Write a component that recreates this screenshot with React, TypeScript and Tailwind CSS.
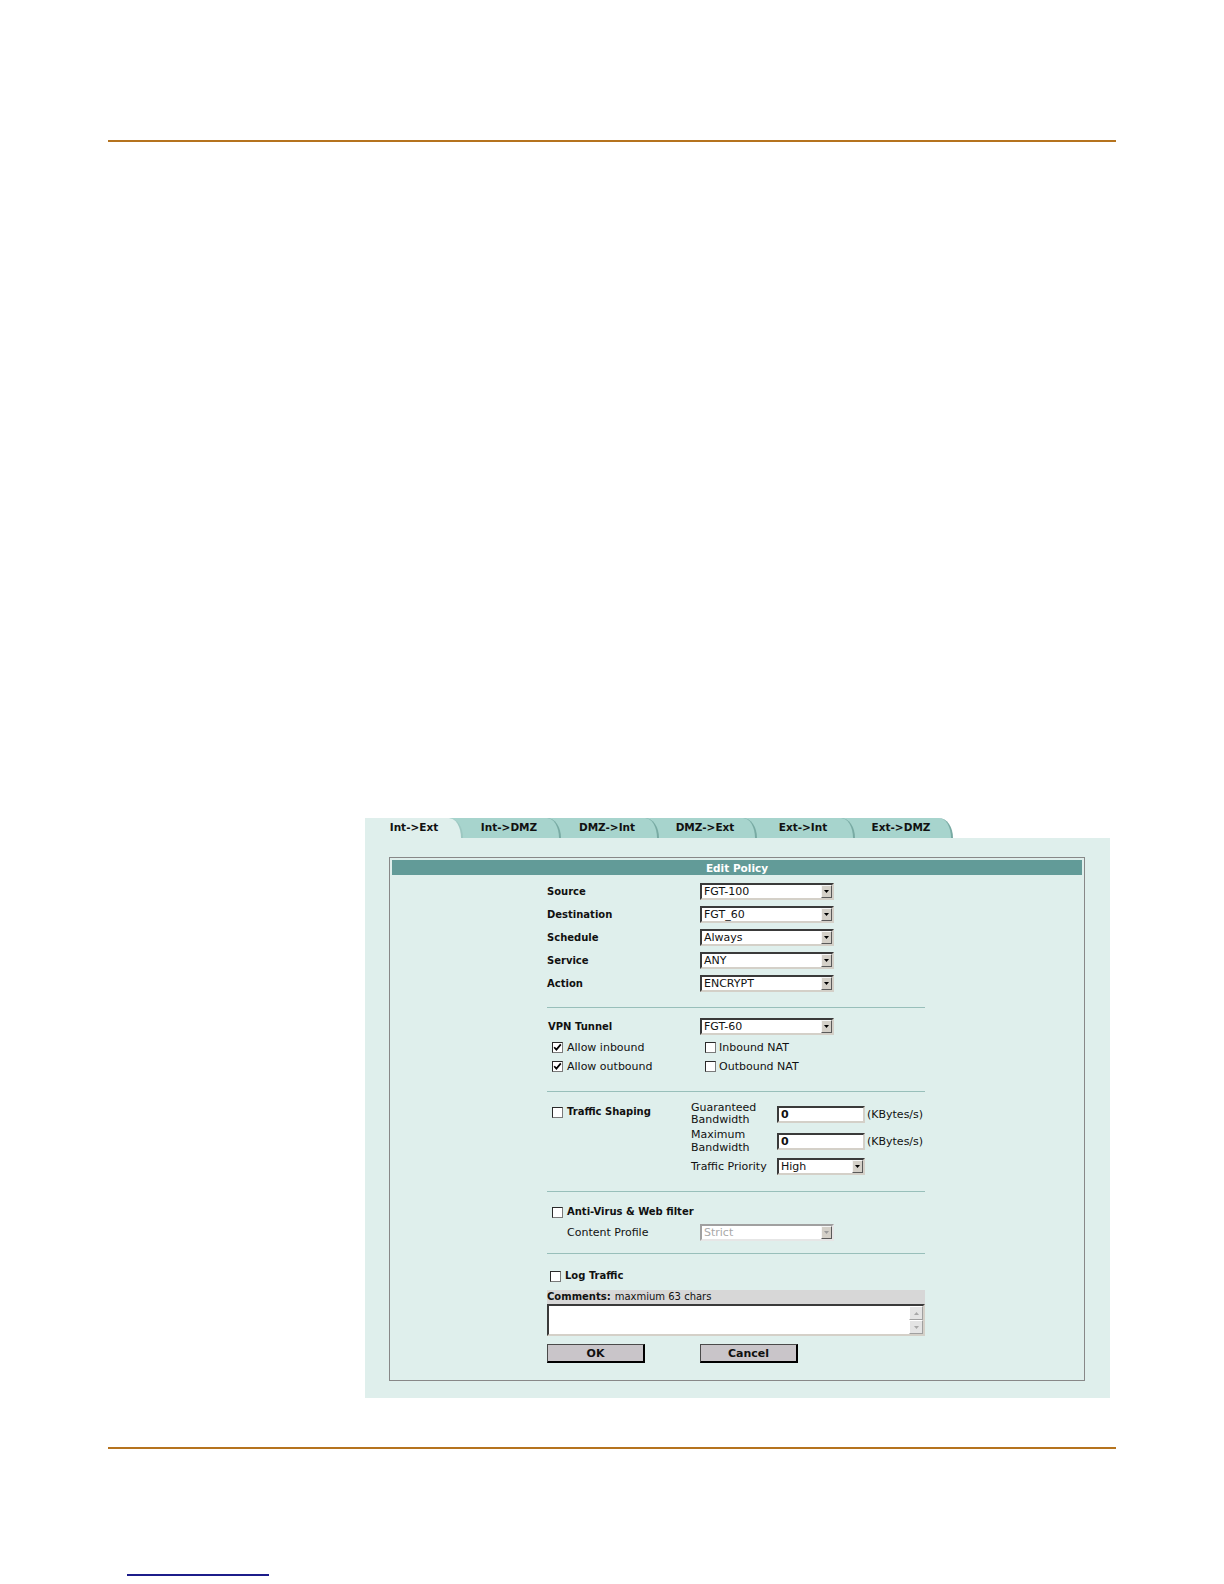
import clsx from 'clsx';

const TABS = ['Int->Ext', 'Int->DMZ', 'DMZ->Int', 'DMZ->Ext', 'Ext->Int', 'Ext->DMZ'];

function Check({ checked }: { checked?: boolean }) {
  return (
    <span className="inline-flex h-[11px] w-[11px] shrink-0 items-center justify-center border border-t-[#2a2a2a] border-l-[#2a2a2a] border-r-[#7a7a7a] border-b-[#7a7a7a] bg-white">
      {checked && (
        <svg width="9" height="9" viewBox="0 0 9 9">
          <path d="M1.2 4.2 L3.4 6.6 L7.8 1.4" stroke="#000" strokeWidth="1.7" fill="none" />
        </svg>
      )}
    </span>
  );
}

function Select({ value, className, disabled }: { value: string; className: string; disabled?: boolean }) {
  return (
    <div
      className={clsx(
        'flex h-[17px] items-stretch border-2 bg-white',
        disabled
          ? 'border-t-[#a0a0a0] border-l-[#a0a0a0] border-b-[#e6e6e6] border-r-[#e6e6e6] text-[#a9a9a9]'
          : 'border-t-[#3a3a3a] border-l-[#3a3a3a] border-b-[#d4d0c8] border-r-[#d4d0c8] text-[#111]',
        className
      )}
    >
      <span className="flex-1 pl-[2px] text-[11px] leading-[13px]">{value}</span>
      <span className="flex w-[11px] items-center justify-center border border-t-[#f6f6f6] border-l-[#f6f6f6] border-b-[#5a5a5a] border-r-[#5a5a5a] bg-[#d4d0c8]">
        <svg width="5" height="3" viewBox="0 0 5 3">
          <path d="M0 0h5L2.5 3z" fill={disabled ? '#9a9a9a' : '#000'} />
        </svg>
      </span>
    </div>
  );
}

function TextInput({ value }: { value: string }) {
  return (
    <div className="h-[17px] w-[88px] border-2 border-t-[#3a3a3a] border-l-[#3a3a3a] border-b-[#d4d0c8] border-r-[#d4d0c8] bg-white pl-[2px] text-[11px] font-bold leading-[13px]">
      {value}
    </div>
  );
}

function Label({ children, className }: { children: React.ReactNode; className?: string }) {
  return <span className={clsx('block text-[10px] font-bold leading-[12px]', className)}>{children}</span>;
}

function Rule() {
  return <div className="h-px bg-[#98bfba]" />;
}

function Tabs() {
  return (
    <div className="flex h-[20px]">
      {TABS.map((t, i) => (
        <div key={t} className={clsx('w-[98px]', i === TABS.length - 1 ? 'bg-white' : 'bg-[#a7d4cd]')}>
          <div
            className={clsx(
              'flex h-full items-center justify-center rounded-tr-[14px_20px] border-r-2 text-[10.5px] font-bold',
              i === 0 ? 'bg-[#dfefec] border-[#9cc7c1] pl-[2px]' : 'bg-[#a7d4cd] border-[#78aaa3] pr-[4px]'
            )}
          >
            {t}
          </div>
        </div>
      ))}
    </div>
  );
}

function PolicyForm() {
  const top = [
    ['Source', 'FGT-100'],
    ['Destination', 'FGT_60'],
    ['Schedule', 'Always'],
    ['Service', 'ANY'],
    ['Action', 'ENCRYPT'],
  ];
  return (
    <div className="ml-[155px] w-[378px] pb-[15px] pt-[5px]">
      {top.map(([l, v]) => (
        <div key={l} className="flex h-[23px] items-center">
          <Label className="w-[153px]">{l}</Label>
          <Select value={v} className="w-[134px]" />
        </div>
      ))}

      <div className="mt-[12px]">
        <Rule />
      </div>

      {/* VPN */}
      <div className="mt-[7px] flex h-[23px] items-center">
        <Label className="w-[153px] pl-[1px]">VPN Tunnel</Label>
        <Select value="FGT-60" className="w-[134px]" />
      </div>
      {[
        ['Allow inbound', 'Inbound NAT'],
        ['Allow outbound', 'Outbound NAT'],
      ].map(([a, b]) => (
        <div key={a} className="flex h-[19px] items-center text-[11px] leading-[13px]">
          <div className="flex w-[153px] items-center pl-[5px]">
            <Check checked />
            <span className="ml-[4px]">{a}</span>
          </div>
          <div className="flex items-center pl-[5px]">
            <Check />
            <span className="ml-[3px]">{b}</span>
          </div>
        </div>
      ))}

      <div className="mt-[15px]">
        <Rule />
      </div>

      {/* Traffic shaping */}
      <div className="mt-[8px] flex">
        <div className="flex w-[144px] items-center self-start pl-[5px] pt-[6px]">
          <Check />
          <Label className="ml-[4px]">Traffic Shaping</Label>
        </div>
        <div className="text-[11px] leading-[13px]">
          <div className="flex h-[28px] items-center">
            <div className="w-[86px] leading-[12.5px]">
              Guaranteed
              <br />
              Bandwidth
            </div>
            <TextInput value="0" />
            <span className="ml-[2px]">(KBytes/s)</span>
          </div>
          <div className="flex h-[27px] items-center">
            <div className="w-[86px] leading-[12.5px]">
              Maximum
              <br />
              Bandwidth
            </div>
            <TextInput value="0" />
            <span className="ml-[2px]">(KBytes/s)</span>
          </div>
          <div className="flex h-[22px] items-center">
            <div className="w-[86px]">Traffic Priority</div>
            <Select value="High" className="w-[88px]" />
          </div>
        </div>
      </div>

      <div className="mt-[14px]">
        <Rule />
      </div>

      {/* Anti-virus */}
      <div className="mt-[10px] flex h-[20px] items-center pl-[5px]">
        <Check />
        <Label className="ml-[4px]">Anti-Virus &amp; Web filter</Label>
      </div>
      <div className="flex h-[20px] items-center">
        <div className="w-[153px] pl-[20px] text-[11px] leading-[13px]">Content Profile</div>
        <Select value="Strict" className="w-[134px]" disabled />
      </div>

      <div className="mt-[11px]">
        <Rule />
      </div>

      {/* Log + comments */}
      <div className="mt-[12px] flex h-[20px] items-center pl-[3px]">
        <Check />
        <Label className="ml-[4px]">Log Traffic</Label>
      </div>
      <div className="mt-[4px] flex h-[14px] items-center bg-[#d7d7d7] text-[10px] leading-[12px]">
        <span className="font-bold">Comments:</span>
        <span className="ml-[4px]">maxmium 63 chars</span>
      </div>
      <div className="flex h-[32px] border-2 border-t-[#3a3a3a] border-l-[#3a3a3a] border-b-[#d4d0c8] border-r-[#d4d0c8] bg-white">
        <div className="flex-1" />
        <div className="flex w-[14px] flex-col">
          <div className="flex h-[14px] items-center justify-center border border-t-[#fff] border-l-[#fff] border-b-[#a0a0a0] border-r-[#a0a0a0] bg-[#e4e4e4]">
            <svg width="5" height="3" viewBox="0 0 5 3">
              <path d="M0 3h5L2.5 0z" fill="#a8a8a8" />
            </svg>
          </div>
          <div className="flex h-[14px] items-center justify-center border border-t-[#fff] border-l-[#fff] border-b-[#a0a0a0] border-r-[#a0a0a0] bg-[#e4e4e4]">
            <svg width="5" height="3" viewBox="0 0 5 3">
              <path d="M0 0h5L2.5 3z" fill="#a8a8a8" />
            </svg>
          </div>
        </div>
      </div>

      <div className="mt-[8px] flex h-[19px]">
        <button className="w-[98px] border border-[#4a4a4a] border-b-2 border-r-2 border-b-black border-r-black bg-[#c9c5c9] text-[11px] font-bold leading-none text-[#111]">
          OK
        </button>
        <button className="ml-[55px] w-[98px] border border-[#4a4a4a] border-b-2 border-r-2 border-b-black border-r-black bg-[#c9c5c9] text-[11px] font-bold leading-none text-[#111]">
          Cancel
        </button>
      </div>
    </div>
  );
}

export default function App() {
  return (
    <div className="min-h-[1584px] w-[1224px] bg-white px-[108px] pt-[140px] font-['DejaVu_Sans',sans-serif] text-[#111]">
      <div className="h-[2px] bg-[#b5731e]" />

      {/* Policy screen */}
      <div className="ml-[257px] mt-[676px] w-[745px]">
        <Tabs />
        <div className="h-[560px] bg-[#dfefec] pl-[24px] pr-[25px] pt-[19px]">
          <div className="border border-[#888] p-[2px]">
            <div className="flex h-[15px] items-center justify-center bg-[#629b98] text-[10.5px] font-bold leading-[12px] text-white">
              Edit Policy
            </div>
            <PolicyForm />
          </div>
        </div>
      </div>

      <div className="mt-[49px] h-[2px] bg-[#b5731e]" />
      <div className="ml-[19px] mt-[125px] h-[2px] w-[142px] bg-[#1c1c8a]" />
    </div>
  );
}
